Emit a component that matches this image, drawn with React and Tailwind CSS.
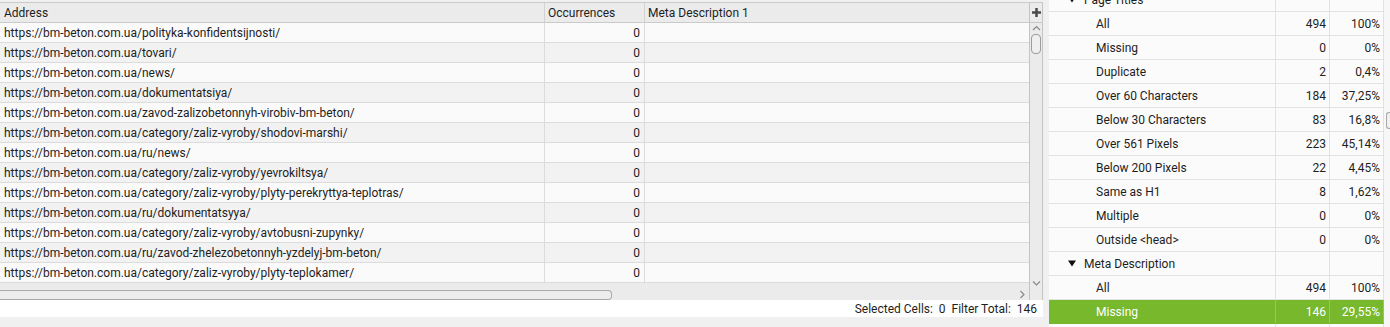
const ROWS = [
  'https://bm-beton.com.ua/polityka-konfidentsijnosti/',
  'https://bm-beton.com.ua/tovari/',
  'https://bm-beton.com.ua/news/',
  'https://bm-beton.com.ua/dokumentatsiya/',
  'https://bm-beton.com.ua/zavod-zalizobetonnyh-virobiv-bm-beton/',
  'https://bm-beton.com.ua/category/zaliz-vyroby/shodovi-marshi/',
  'https://bm-beton.com.ua/ru/news/',
  'https://bm-beton.com.ua/category/zaliz-vyroby/yevrokiltsya/',
  'https://bm-beton.com.ua/category/zaliz-vyroby/plyty-perekryttya-teplotras/',
  'https://bm-beton.com.ua/ru/dokumentatsyya/',
  'https://bm-beton.com.ua/category/zaliz-vyroby/avtobusni-zupynky/',
  'https://bm-beton.com.ua/ru/zavod-zhelezobetonnyh-yzdelyj-bm-beton/',
  'https://bm-beton.com.ua/category/zaliz-vyroby/plyty-teplokamer/',
]

// overview tree on the right
const STATS = [
  { type: 'group', label: 'Page Titles' },
  { label: 'All', n: '494', p: '100%' },
  { label: 'Missing', n: '0', p: '0%' },
  { label: 'Duplicate', n: '2', p: '0,4%' },
  { label: 'Over 60 Characters', n: '184', p: '37,25%' },
  { label: 'Below 30 Characters', n: '83', p: '16,8%' },
  { label: 'Over 561 Pixels', n: '223', p: '45,14%' },
  { label: 'Below 200 Pixels', n: '22', p: '4,45%' },
  { label: 'Same as H1', n: '8', p: '1,62%' },
  { label: 'Multiple', n: '0', p: '0%' },
  { label: 'Outside <head>', n: '0', p: '0%' },
  { type: 'group', label: 'Meta Description' },
  { label: 'All', n: '494', p: '100%' },
  { label: 'Missing', n: '146', p: '29,55%', selected: true },
  { type: 'empty' },
]

function Caret() {
  return (
    <svg width="8" height="7" viewBox="0 0 8 7" className="shrink-0">
      <polygon points="0,0.5 8,0.5 4,6.5" fill="#111" />
    </svg>
  )
}

function Chevron({ dir }) {
  const d = {
    up: 'M1 5 L4.5 1.5 L8 5',
    down: 'M1 1.5 L4.5 5 L8 1.5',
    right: 'M1.5 1 L5 4.5 L1.5 8',
  }[dir]
  const size = dir === 'right' ? { w: 7, h: 9 } : { w: 9, h: 7 }
  return (
    <svg width={size.w} height={size.h} viewBox={`0 0 ${size.w} ${size.h}`}>
      <path d={d} fill="none" stroke="#8a8a8a" strokeWidth="1.2" />
    </svg>
  )
}

function StatRow({ row }) {
  if (row.type === 'group') {
    return (
      <div className="flex shrink-0 h-[24px] border-b border-[#e2e2e2]">
        <div className="w-[227px] border-r border-[#e2e2e2] flex items-center gap-[8px] pl-[19px]">
          <Caret />
          <span>{row.label}</span>
        </div>
        <div className="w-[54px] border-r border-[#e2e2e2]" />
        <div className="w-[54px] border-r border-[#e2e2e2]" />
      </div>
    )
  }
  if (row.type === 'empty') {
    return (
      <div className="flex shrink-0 h-[24px]">
        <div className="w-[227px] border-r border-[#e2e2e2]" />
        <div className="w-[54px] border-r border-[#e2e2e2]" />
        <div className="w-[54px] border-r border-[#e2e2e2]" />
      </div>
    )
  }
  const sel = row.selected
  const line = sel ? 'border-[#93c95a]' : 'border-[#e2e2e2]'
  return (
    <div className={`flex shrink-0 h-[24px] border-b ${sel ? 'bg-[#77b82c] text-white border-[#77b82c]' : 'border-[#e2e2e2]'}`}>
      <div className={`w-[227px] border-r ${line} flex items-center pl-[47px]`}>{row.label}</div>
      <div className={`w-[54px] border-r ${line} flex items-center justify-end pr-[3px]`}>{row.n}</div>
      <div className={`w-[54px] border-r ${line} flex items-center justify-end pr-[3px]`}>{row.p}</div>
    </div>
  )
}

export default function App() {
  return (
    <div
      className="w-[1390px] h-[327px] flex bg-[#f0f0f0] overflow-hidden text-[12px] text-[#1e1e1e] leading-none"
      style={{ fontFamily: 'Roboto, "Liberation Sans", sans-serif' }}
    >
      {/* ── left: results table ── */}
      <div className="w-[1043px] flex flex-col pt-[2px]">
        <div className="border-t border-[#cacaca] bg-[#ebebeb]">
          {/* header */}
          <div className="flex h-[20px] border-b border-[#cacaca]">
            <div className="w-[545px] border-r border-[#d2d2d2] flex items-center pl-[4px]">Address</div>
            <div className="w-[100px] border-r border-[#d2d2d2] flex items-center pl-[3px]">Occurrences</div>
            <div className="w-[384px] flex items-center pl-[3px]">Meta Description 1</div>
            <div className="w-[14px] border-l border-r border-[#c4c4c4] flex items-center justify-center">
              <svg width="9" height="9" viewBox="0 0 9 9">
                <rect x="3.25" y="0" width="2.5" height="9" fill="#4a4a4a" />
                <rect x="0" y="3.25" width="9" height="2.5" fill="#4a4a4a" />
              </svg>
            </div>
          </div>

          {/* body */}
          <div className="flex">
            <div className="w-[1029px] flex flex-col">
              {ROWS.map((url, i) => (
                <div
                  key={url}
                  className={`flex h-[20px] border-b border-[#dcdcdc] ${i % 2 ? 'bg-[#f2f2f2]' : 'bg-[#fafafa]'}`}
                >
                  <div className="w-[545px] border-r border-[#dcdcdc] flex items-center pl-[4px] whitespace-nowrap">{url}</div>
                  <div className="w-[100px] border-r border-[#dcdcdc] flex items-center justify-end pr-[4px]">0</div>
                  <div className="flex-1" />
                </div>
              ))}
              {/* horizontal scrollbar */}
              <div className="h-[17px] bg-[#ebebeb] flex items-start">
                <div className="mt-[7px] w-[612px] h-[10px] border border-[#a9a9a9] rounded-r-[4px] border-l-0 bg-[#ececec]" />
                <div className="ml-auto mr-[3px] mt-[7px]">
                  <Chevron dir="right" />
                </div>
              </div>
            </div>
            {/* vertical scrollbar */}
            <div className="w-[14px] h-[277px] bg-[#ebebeb] border-l border-r border-[#c4c4c4] flex flex-col items-center">
              <div className="mt-[2px]">
                <Chevron dir="up" />
              </div>
              <div className="mt-[2px] w-[10px] h-[20px] rounded-[4px] border border-[#9c9c9c] bg-[#efefef]" />
              <div className="mt-auto mb-[13px]">
                <Chevron dir="down" />
              </div>
            </div>
          </div>
        </div>

        {/* status bar */}
        <div className="h-[17px] bg-white flex items-center justify-end pr-[6px] whitespace-pre">
          Selected Cells:  0  Filter Total:  146
        </div>
      </div>

      {/* ── right: overview ── */}
      <div className="ml-[6px] flex-1 flex bg-[#fbfbfb]">
        <div className="w-[335px] flex flex-col -mt-[12px]">
          {STATS.map((row, i) => (
            <StatRow key={i} row={row} />
          ))}
        </div>
        <div className="flex-1 bg-[#f7f7f7] pl-[2px]">
          <div className="mt-[112px] h-[17px] border border-r-0 border-[#a8a8a8] rounded-l-[3px] bg-[#f0f0f0]" />
        </div>
      </div>
    </div>
  )
}
